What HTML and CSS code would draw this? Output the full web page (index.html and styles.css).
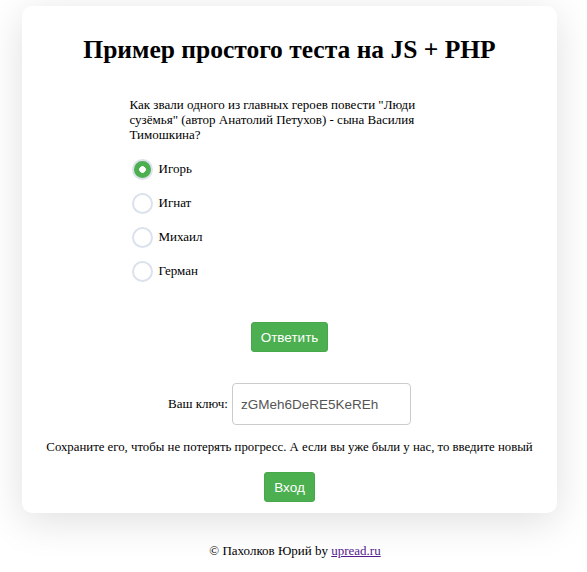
FILE: index.html
```html
<!DOCTYPE html>
<html lang="ru">
<head>
<meta charset="utf-8">
<title>Тест</title>
<link rel="stylesheet" href="styles.css">
</head>
<body>
<div class="card">
  <h1 class="title">Пример простого теста на JS + PHP</h1>
  <div class="quiz">
    <p class="question">Как звали одного из главных героев повести "Люди сузёмья" (автор Анатолий Петухов) - сына Василия Тимошкина?</p>
    <label class="option"><input type="radio" name="a" class="radio" checked><span>Игорь</span></label>
    <label class="option"><input type="radio" name="a" class="radio"><span>Игнат</span></label>
    <label class="option"><input type="radio" name="a" class="radio"><span>Михаил</span></label>
    <label class="option"><input type="radio" name="a" class="radio"><span>Герман</span></label>
  </div>
  <div class="actions"><button class="btn">Ответить</button></div>
  <div class="key-row">
    <span class="key-label">Ваш ключ:</span>
    <input class="key-input" type="text" value="zGMeh6DeRE5KeREh">
  </div>
  <p class="note">Сохраните его, чтобы не потерять прогресс. А если вы уже были у нас, то введите новый</p>
  <div class="actions login"><button class="btn">Вход</button></div>
</div>
<footer class="footer">© Пахолков Юрий by <a href="#" class="link">upread.ru</a></footer>
</body>
</html>
```
FILE: styles.css
```css
html, body {
  margin: 0;
  padding: 0;
  background: #ffffff;
}
body {
  font-family: "Liberation Serif", "Times New Roman", serif;
  font-size: 13px;
  color: #000;
}
.card {
  width: 535px;
  margin: 6px 0 0 22px;
  padding: 24px 0 11px;
  box-sizing: border-box;
  background: #fff;
  border-radius: 10px;
  box-shadow: 0 8px 40px rgba(0, 0, 0, 0.13);
}
.title {
  margin: 0;
  text-align: center;
  font-size: 25.5px;
  font-weight: bold;
  line-height: 40px;
}
.quiz {
  width: 320px;
  margin: 27px auto 0;
}
.question {
  margin: 0 0 10px;
  line-height: 15px;
}
.option {
  display: flex;
  align-items: center;
  height: 34px;
  gap: 6px;
  margin-left: 2px;
}
.radio {
  appearance: none;
  -webkit-appearance: none;
  width: 21px;
  height: 21px;
  margin: 0;
  border-radius: 50%;
  border: 2px solid #dbe2ec;
  background: #fff;
  box-sizing: border-box;
}
.radio:checked {
  background: radial-gradient(circle, #fff 0 3px, #4caf50 3.6px);
}
.actions {
  display: flex;
  justify-content: center;
  margin-top: 34px;
}
.btn {
  font-family: "Liberation Sans", Arial, sans-serif;
  font-size: 13.5px;
  color: #fff;
  background: #4caf50;
  border: 1px solid #47a84b;
  border-radius: 3px;
  padding: 0 9px;
  height: 30px;
}
.key-row {
  display: flex;
  justify-content: center;
  align-items: center;
  gap: 4px;
  margin-top: 31px;
}
.key-input {
  width: 179px;
  height: 42px;
  box-sizing: border-box;
  border: 1px solid #cccccc;
  border-radius: 4px;
  padding: 0 8px;
  font-family: "Liberation Sans", Arial, sans-serif;
  font-size: 13.5px;
  color: #555;
}
.note {
  margin: 15px 0 0;
  text-align: center;
  line-height: 15px;
  font-size: 12.8px;
}
.login {
  margin-top: 17px;
}
.footer {
  text-align: center;
  margin-top: 30px;
  line-height: 15px;
  padding-left: 3px;
}
.link {
  color: #551a8b;
}
```
